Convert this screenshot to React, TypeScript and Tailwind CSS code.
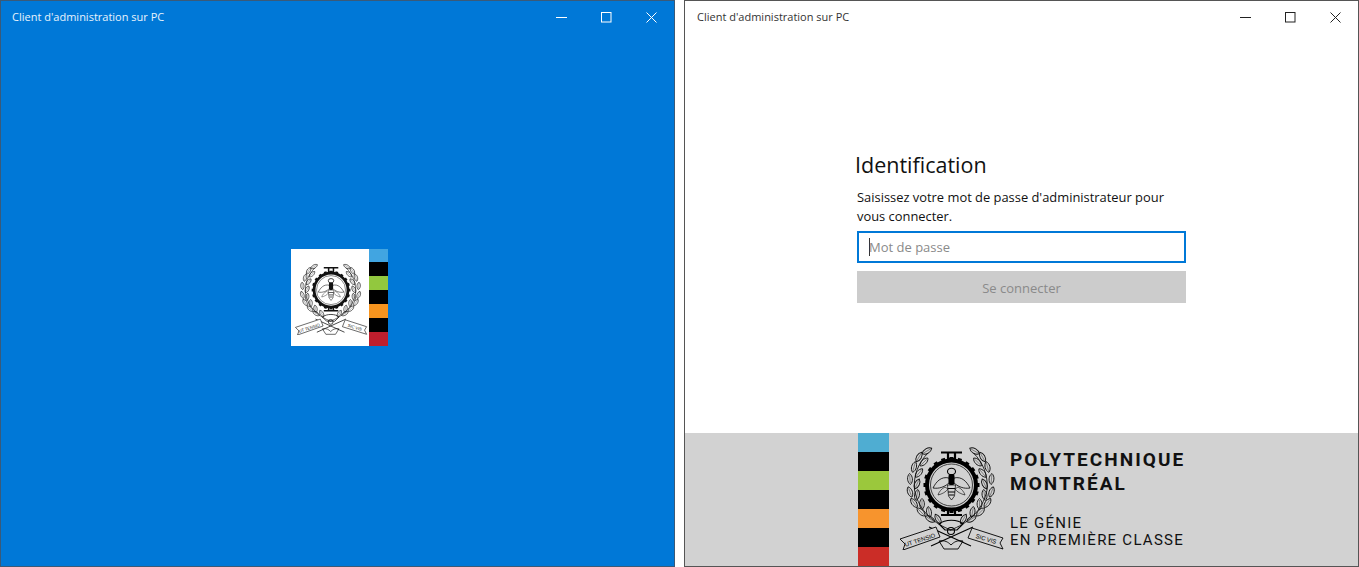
const uiFont = "font-['Open_Sans','Noto_Sans',sans-serif]";

const Leaves = ({ flip }: { flip?: boolean }) => {
	// position des feuilles le long de la branche (x, y, angle)
	const leaves: [number, number, number][] = [
		[32, 11, -30], [24, 17, -60], [29, 22, -45], [19, 27, -75], [24, 33, -50],
		[15, 39, -95], [22, 44, -65], [15, 52, -110], [22, 55, -80], [19, 63, -125],
		[27, 64, -90], [26, 72, -135], [34, 72, -100], [35, 79, -150], [43, 79, -120],
	];
	return (
		<g transform={flip ? 'translate(111.5 0) scale(-1 1)' : undefined}>
			<path d="M56 90C40 84 24 72 19.5 50 18 35 24 22 33 13" fill="none" stroke="#111" strokeWidth=".9" />
			{leaves.map(([x, y, a]) => (
				<g key={`${x}-${y}`} transform={`translate(${x} ${y}) rotate(${a})`}>
					<path d="M-5.5 0C-3-3.2 3-3.2 5.5 0 3 3.2-3 3.2-5.5 0Z" fill="none" stroke="#111" strokeWidth=".9" />
					<path d="M-4 0H4" stroke="#111" strokeWidth=".4" />
				</g>
			))}
		</g>
	);
};

const Emblem = ({ size, dark }: { size: number; dark?: boolean }) => {
	const teeth = Array.from({ length: 20 }, (_, i) => i * 18);
	const ink = dark ? '#000' : '#111';
	return (
		<svg width={size} height={size} viewBox="0 0 110 110" className="shrink-0">
			<Leaves />
			<Leaves flip />
			{/* roue dentée */}
			{teeth.map((a) => (
				<rect key={a} x="54.5" y="17" width="4" height="4" fill={ink} transform={`rotate(${a} 56.5 45)`} />
			))}
			<circle cx="56.5" cy="45" r="24.5" fill="none" stroke={ink} strokeWidth="4" />
			<circle cx="56.5" cy="45" r="21" fill="none" stroke={ink} strokeWidth=".7" />
			<path d="M46 12.5H67M53 12.5V19H60V12.5M46 75H67M53 75V70H60V75" fill="none" stroke={ink} strokeWidth="2.2" />
			{/* abeille */}
			<path d="M54 38C46 36 41 42 38 48 44 49 50 47 55 42ZM59 38C67 36 72 42 75 48 69 49 63 47 58 42Z" fill="none" stroke={ink} strokeWidth=".8" />
			<path d="M50 47C46 49 44 52 43 55 47 54 51 52 53 49ZM63 47C67 49 69 52 70 55 66 54 62 52 60 49Z" fill="none" stroke={ink} strokeWidth=".6" />
			<ellipse cx="56.5" cy="31.5" rx="4" ry="3.2" fill="none" stroke={ink} strokeWidth="1.1" />
			<rect x="53.5" y="34" width="6" height="11" rx="2" fill={ink} />
			<path d="M52.5 45H60.5L59.5 56 56.5 60 53.5 56Z" fill="none" stroke={ink} strokeWidth=".7" />
			<path d="M53 48.5H60M53 52H60M54 55H59" stroke={ink} strokeWidth="1" />
			{/* noeud et rubans */}
			<path d="M44 84C50 79 63 79 68 84L62 90H50ZM36 106 78 87M76 106 34 87" fill="none" stroke={ink} strokeWidth="1.1" />
			<circle cx="56" cy="91" r="3.5" fill="none" stroke={ink} strokeWidth="1.1" />
			<path d="M44 101C50 100 53 102 56 105 59 102 62 100 68 101L63 109H49Z" fill="none" stroke={ink} strokeWidth=".9" />
			<path d="M5 99 41 87 45 97 8 110 10 104Z" fill={dark ? '#d2d2d2' : '#fff'} stroke={ink} strokeWidth=".9" />
			<path d="M77 88 108 98 105 103 108 109 73 98Z" fill={dark ? '#d2d2d2' : '#fff'} stroke={ink} strokeWidth=".9" />
			<text x="25" y="102" fontSize="6" fill={ink} textAnchor="middle" transform="rotate(-18 25 100)" fontFamily="Liberation Sans, sans-serif">UT TENSIO</text>
			<text x="91" y="101" fontSize="6" fill={ink} textAnchor="middle" transform="rotate(17 91 99)" fontFamily="Liberation Sans, sans-serif">SIC VIS</text>
		</svg>
	);
};

const TitleBar = ({ light }: { light?: boolean }) => {
	const stroke = light ? '#fff' : '#222';
	return (
		<div className={`flex h-[31px] shrink-0 items-center justify-between pt-px ${light ? 'text-[#e8f3fc]' : 'text-[#333]'}`}>
			<span className={`text-[11px] ${light ? 'pl-[11px]' : 'pl-[12px]'} ${uiFont}`}>Client d'administration sur PC</span>
			<div className="flex">
				<div className="flex h-[31px] w-[45px] items-center justify-center">
					<svg width="11" height="11" viewBox="0 0 11 11"><path d="M0 5.5H11" stroke={stroke} /></svg>
				</div>
				<div className="flex h-[31px] w-[45px] items-center justify-center">
					<svg width="11" height="11" viewBox="0 0 11 11"><rect x=".5" y=".5" width="9.5" height="9.5" fill="none" stroke={stroke} /></svg>
				</div>
				<div className="flex h-[31px] w-[45px] items-center justify-center">
					<svg width="11" height="11" viewBox="0 0 11 11"><path d="M.5.5L10.5 10.5M10.5.5L.5 10.5" stroke={stroke} /></svg>
				</div>
			</div>
		</div>
	);
};

const smallStripes = ['bg-[#41a5e1]', 'bg-black', 'bg-[#92c83e]', 'bg-black', 'bg-[#f7941e]', 'bg-black', 'bg-[#be1e2d]'];
const bigStripes = ['bg-[#4fadd2]', 'bg-black', 'bg-[#9bc83c]', 'bg-black', 'bg-[#f7942d]', 'bg-black', 'bg-[#cb2d27]'];

const App = () => {
	return (
		<div className="flex h-[567px] w-[1359px] justify-between overflow-hidden bg-white">
			{/* Écran de démarrage */}
			<div className="flex w-[675px] flex-col border border-[#3a5a78] bg-[#0078d7]">
				<TitleBar light />
				<div className="flex flex-1 items-center justify-center pb-[4px] pl-[3px]">
					<div className="flex h-[97px] w-[97px]">
						<div className="flex w-[78px] items-center justify-center bg-white">
							<Emblem size={76} />
						</div>
						<div className="flex w-[19px] flex-col">
							{smallStripes.map((c, i) => (
								<div key={i} className={`flex-1 ${c}`} />
							))}
						</div>
					</div>
				</div>
			</div>

			{/* Écran d'identification */}
			<div className="flex w-[675px] flex-col border border-[#555] bg-white">
				<TitleBar />
				<div className="flex flex-1 flex-col pl-[172px] pt-[117px]">
					<h1 className={`-ml-[2px] text-[21.5px] leading-[32px] text-[#111] ${uiFont}`}>Identification</h1>
					<p className={`mt-[7px] w-[329px] text-[12.9px] leading-[19px] text-[#111] ${uiFont}`}>
						Saisissez votre mot de passe d'administrateur pour vous connecter.
					</p>
					<div className="mt-[5px] flex h-[32px] w-[329px] items-center border-2 border-[#0078d7] pl-[10px]">
						<div className="h-[18px] w-px bg-[#333]" />
						<span className={`-ml-px pt-[2px] text-[13px] text-[#8a8a8a] ${uiFont}`}>Mot de passe</span>
					</div>
					<div className={`mt-[8px] flex h-[32px] w-[329px] items-center justify-center bg-[#cccccc] pt-[3px] text-[13px] text-[#8a8a8a] ${uiFont}`}>
						Se connecter
					</div>
				</div>
				<div className="flex h-[133px] shrink-0 bg-[#d2d2d2] pl-[173px]">
					<div className="flex w-[31px] flex-col">
						{bigStripes.map((c, i) => (
							<div key={i} className={`flex-1 ${c}`} />
						))}
					</div>
					<div className="ml-[6px] pt-[7px]">
						<Emblem size={110} dark />
					</div>
					<div className="ml-[5px] flex flex-col pt-[15px] font-['Roboto',sans-serif] text-[#111]">
						<span className="text-[19px] leading-[24px] font-bold tracking-[2.05px]">POLYTECHNIQUE</span>
						<span className="text-[19px] leading-[24px] font-bold tracking-[2.05px]">MONTRÉAL</span>
						<span className="mt-[19px] text-[15px] leading-[17px] tracking-[1.25px]">LE GÉNIE</span>
						<span className="text-[15px] leading-[17px] tracking-[1.25px]">EN PREMIÈRE CLASSE</span>
					</div>
				</div>
			</div>
		</div>
	);
};

export default App;
